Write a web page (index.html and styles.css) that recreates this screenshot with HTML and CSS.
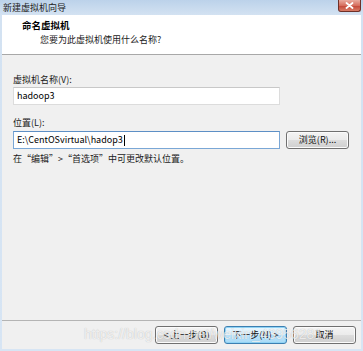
FILE: index.html
```
<!DOCTYPE html>
<html lang="zh">
<head>
<meta charset="utf-8">
<title>新建虚拟机向导</title>
<link rel="stylesheet" href="styles.css">
</head>
<body>
<div class="window">
  <div class="titlebar">
    <div class="title">新建虚拟机向导</div>
    <div class="xbtn"><svg class="xbtn-icon" width="9" height="7" viewBox="0 0 9 7"><path d="M1.5 1 L7.5 6 M7.5 1 L1.5 6" stroke="#ffffff" stroke-width="1.8" stroke-linecap="round"/></svg></div>
  </div>
  <div class="frame">
    <div class="header">
      <div class="h-title">命名虚拟机</div>
      <div class="h-sub">您要为此虚拟机使用什么名称?</div>
    </div>
    <div class="body">
      <div class="label">虚拟机名称(V):</div>
      <div class="input">hadoop3</div>
      <div class="label second">位置(L):</div>
      <div class="row">
        <div class="input focus">E:\CentOSvirtual\hadop3<span class="caret"></span></div>
        <div class="btn browse">浏览(R)...</div>
      </div>
      <div class="hint">在“编辑”&gt;“首选项”中可更改默认位置。</div>
    </div>
    <div class="footer">
      <div class="btn">&lt; 上一步(B)</div>
      <div class="btn default">下一步(N) &gt;</div>
      <div class="btn">取消</div>
      <div class="watermark">https://blog.csdn.net/weixin_43956281</div>
    </div>
  </div>
</div>
</body>
</html>
```
FILE: styles.css
```
html, body {
  margin: 0;
  padding: 0;
  background: #ffffff;
  width: 363px;
  height: 351px;
  overflow: hidden;
}
.window {
  width: 363px;
  height: 351px;
  box-sizing: border-box;
  background: linear-gradient(#bcd2ea, #d3e2f2 15px, #d7e5f4);
  display: flex;
  flex-direction: column;
  font-family: "Noto Sans CJK SC", "Noto Sans", sans-serif;
  font-size: 9px;
  color: #1a1a1a;
}
.titlebar {
  height: 15px;
  flex: 0 0 15px;
  display: flex;
  flex-direction: row;
  align-items: flex-start;
  padding: 0 2px 0 3px;
}
.title {
  flex: 1 1 auto;
  line-height: 15px;
  font-size: 9px;
  color: #222;
}
.xbtn {
  flex: 0 0 auto;
  width: 23px;
  height: 12px;
  box-sizing: border-box;
  background-color: #c8503e;
  background-image: linear-gradient(#e9ab9f, #d66e5e 50%, #c4493a 55%, #d97c66);
  border: 1px solid #6e3028;
  border-top: 0;
  border-radius: 0 0 3px 3px;
  display: flex;
  align-items: center;
  justify-content: center;
}
.xbtn-icon {
  display: block;
}
.frame {
  flex: 1;
  margin: 0 2px 2px 2px;
  background: #f0f0f0;
  display: flex;
  flex-direction: column;
}
.header {
  background: #ffffff;
  border-bottom: 1px solid #a8a8a8;
  padding-top: 4px;
  box-sizing: border-box;
  height: 40px;
}
.h-title {
  font-weight: bold;
  font-size: 9.5px;
  line-height: 12px;
  padding-left: 20px;
  color: #000;
}
.h-sub {
  line-height: 12px;
  margin-top: 3px;
  padding-left: 38px;
  color: #1a1a1a;
}
.body {
  flex: 1;
  padding: 19px 0 0 11px;
  border-bottom: 1px solid #b4b4b4;
}
.label {
  line-height: 12px;
  height: 12px;
  margin-bottom: 1px;
}
.label.second {
  margin-top: 12px;
  margin-bottom: 2px;
}
.input {
  width: 267px;
  height: 18px;
  box-sizing: border-box;
  background: #fff;
  border: 1px solid #dcdcdc;
  border-top-color: #c8c8c8;
  padding-left: 3px;
  line-height: 16px;
  color: #000;
  display: flex;
  align-items: center;
}
.input.focus {
  border-color: #7aa7d6;
  border-top-color: #5d8fc5;
}
.caret {
  display: inline-block;
  width: 1px;
  height: 11px;
  background: #000;
  margin-left: 1px;
}
.row {
  display: flex;
  gap: 6px;
  align-items: center;
}
.btn {
  width: 63px;
  height: 18px;
  box-sizing: border-box;
  border: 1px solid #707070;
  border-radius: 3px;
  background: linear-gradient(#f4f4f4, #ebebeb 50%, #dddddd 51%, #cfcfcf);
  box-shadow: inset 0 0 0 1px #fbfbfb;
  display: flex;
  align-items: center;
  justify-content: center;
  line-height: 12px;
  color: #111;
}
.btn.default {
  border-color: #3c7fb1;
  box-shadow: inset 0 0 0 1px #8fd3f5;
  background: linear-gradient(#eaf6fd, #d9f0fc 50%, #bee6fd 51%, #a7d9f5);
}
.hint {
  margin-top: 4px;
  line-height: 12px;
}
.footer {
  position: relative;
  height: 28px;
  box-sizing: border-box;
  padding: 5px 5px 5px 0;
  display: flex;
  justify-content: flex-end;
  gap: 6px;
}
.watermark {
  position: absolute;
  left: 82px;
  top: 4px;
  font-family: "Liberation Sans", Arial, sans-serif;
  font-size: 14px;
  line-height: 18px;
  color: rgba(255, 255, 255, 0.75);
  text-shadow: 0 0 1px rgba(0, 0, 0, 0.25);
  white-space: nowrap;
  pointer-events: none;
}
```
